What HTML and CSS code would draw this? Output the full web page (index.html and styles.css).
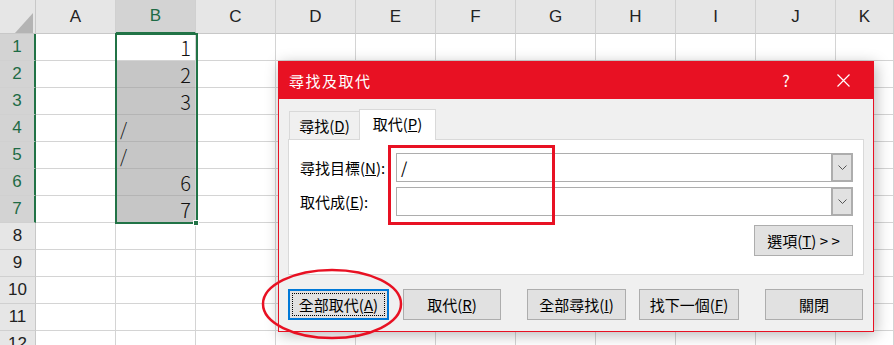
FILE: index.html
```html
<!DOCTYPE html>
<html lang="zh-Hant">
<head>
<meta charset="utf-8">
<title>尋找及取代</title>
<link rel="stylesheet" href="styles.css">
</head>
<body>
<div class="sheet">
  <div class="corner"><svg width="36" height="34" viewBox="0 0 36 34"><polygon points="15,33 33,33 33,13" fill="#b4b4b4"/></svg></div>
  <div class="ch">A</div><div class="ch sel">B</div><div class="ch">C</div><div class="ch">D</div><div class="ch">E</div><div class="ch">F</div><div class="ch">G</div><div class="ch">H</div><div class="ch">I</div><div class="ch">J</div><div class="ch">K</div>

  <div class="rh sel">1</div><div class="c"></div><div class="c b num">1</div><div class="c"></div><div class="c"></div><div class="c"></div><div class="c"></div><div class="c"></div><div class="c"></div><div class="c"></div><div class="c"></div><div class="c"></div>
  <div class="rh sel">2</div><div class="c"></div><div class="c b fill num">2</div><div class="c"></div><div class="c"></div><div class="c"></div><div class="c"></div><div class="c"></div><div class="c"></div><div class="c"></div><div class="c"></div><div class="c"></div>
  <div class="rh sel">3</div><div class="c"></div><div class="c b fill num">3</div><div class="c"></div><div class="c"></div><div class="c"></div><div class="c"></div><div class="c"></div><div class="c"></div><div class="c"></div><div class="c"></div><div class="c"></div>
  <div class="rh sel">4</div><div class="c"></div><div class="c b fill txt">/</div><div class="c"></div><div class="c"></div><div class="c"></div><div class="c"></div><div class="c"></div><div class="c"></div><div class="c"></div><div class="c"></div><div class="c"></div>
  <div class="rh sel">5</div><div class="c"></div><div class="c b fill txt">/</div><div class="c"></div><div class="c"></div><div class="c"></div><div class="c"></div><div class="c"></div><div class="c"></div><div class="c"></div><div class="c"></div><div class="c"></div>
  <div class="rh sel">6</div><div class="c"></div><div class="c b fill num">6</div><div class="c"></div><div class="c"></div><div class="c"></div><div class="c"></div><div class="c"></div><div class="c"></div><div class="c"></div><div class="c"></div><div class="c"></div>
  <div class="rh sel">7</div><div class="c"></div><div class="c b fill num">7</div><div class="c"></div><div class="c"></div><div class="c"></div><div class="c"></div><div class="c"></div><div class="c"></div><div class="c"></div><div class="c"></div><div class="c"></div>
  <div class="rh">8</div><div class="c"></div><div class="c"></div><div class="c"></div><div class="c"></div><div class="c"></div><div class="c"></div><div class="c"></div><div class="c"></div><div class="c"></div><div class="c"></div><div class="c"></div>
  <div class="rh">9</div><div class="c"></div><div class="c"></div><div class="c"></div><div class="c"></div><div class="c"></div><div class="c"></div><div class="c"></div><div class="c"></div><div class="c"></div><div class="c"></div><div class="c"></div>
  <div class="rh">10</div><div class="c"></div><div class="c"></div><div class="c"></div><div class="c"></div><div class="c"></div><div class="c"></div><div class="c"></div><div class="c"></div><div class="c"></div><div class="c"></div><div class="c"></div>
  <div class="rh">11</div><div class="c"></div><div class="c"></div><div class="c"></div><div class="c"></div><div class="c"></div><div class="c"></div><div class="c"></div><div class="c"></div><div class="c"></div><div class="c"></div><div class="c"></div>
  <div class="rh">12</div><div class="c"></div><div class="c"></div><div class="c"></div><div class="c"></div><div class="c"></div><div class="c"></div><div class="c"></div><div class="c"></div><div class="c"></div><div class="c"></div><div class="c"></div>

  <div class="selection"></div>
  <div class="handle"></div>
</div>

<div class="dialog">
  <div class="titlebar">
    <span class="title">尋找及取代</span>
    <span class="help">?</span>
    <span class="close"><svg width="13" height="13" viewBox="0 0 13 13"><path d="M0.5 0.5 L12.5 12.5 M12.5 0.5 L0.5 12.5" stroke="#fff" stroke-width="1.2" fill="none"/></svg></span>
  </div>
  <div class="dbody">
    <div class="tabs">
      <div class="tab">尋找(<u>D</u>)</div>
      <div class="tab active">取代(<u>P</u>)</div>
    </div>
    <div class="panel">
      <div class="field">
        <span class="label">尋找目標(<u>N</u>):</span>
        <div class="combo"><span class="val">/</span><span class="drop"><svg width="9" height="5" viewBox="0 0 9 5"><path d="M0.5 0.5 L4.5 4.5 L8.5 0.5" stroke="#555" stroke-width="1" fill="none"/></svg></span></div>
      </div>
      <div class="field">
        <span class="label">取代成(<u>E</u>):</span>
        <div class="combo"><span class="val"></span><span class="drop"><svg width="9" height="5" viewBox="0 0 9 5"><path d="M0.5 0.5 L4.5 4.5 L8.5 0.5" stroke="#555" stroke-width="1" fill="none"/></svg></span></div>
      </div>
      <div class="opts"><span class="btn opt">選項(<u>T</u>) &gt; &gt;</span></div>
    </div>
    <div class="actions">
      <span class="btn focus w101"><span class="dots">全部取代(<u>A</u>)</span></span>
      <span class="btn w98 g14">取代(<u>R</u>)</span>
      <span class="btn w99 g26">全部尋找(<u>I</u>)</span>
      <span class="btn w100 g13">找下一個(<u>F</u>)</span>
      <span class="btn w98 g26">關閉</span>
    </div>
  </div>
</div>

<div class="mark-rect"></div>
<svg class="mark-ellipse" width="144" height="74" viewBox="0 0 144 74"><ellipse cx="71" cy="36" rx="69" ry="34" stroke="#e81123" stroke-width="2.5" fill="none"/></svg>
</body>
</html>
```

FILE: styles.css
```css
* { box-sizing: border-box; }
html, body { margin: 0; padding: 0; background: #fff; overflow: hidden; }
body { width: 894px; height: 345px; position: relative; font-family: "Noto Sans CJK TC", "Liberation Sans", sans-serif; }

.sheet {
  display: grid;
  grid-template-columns: 36px repeat(10, 80px) 58px;
  grid-template-rows: 34px repeat(12, 27px);
  position: relative;
  width: 894px;
}
.corner { background: #e6e6e6; border-right: 1px solid #c8c8c8; border-bottom: 1px solid #c8c8c8; }
.corner svg { display: block; }
.ch {
  background: #e6e6e6;
  border-right: 1px solid #d0d0d0;
  border-bottom: 1px solid #c8c8c8;
  display: flex; align-items: center; justify-content: center;
  font-family: "Liberation Sans", sans-serif;
  font-size: 17px; color: #222;
}
.ch.sel { background: #d3d3d3; color: #1e6b45; border-bottom: 2px solid #217346; }
.rh {
  background: #e6e6e6;
  border-right: 1px solid #c8c8c8;
  border-bottom: 1px solid #d0d0d0;
  display: flex; align-items: center; justify-content: center;
  font-family: "Liberation Sans", sans-serif;
  font-size: 17px; color: #222;
}
.rh.sel { background: #d3d3d3; color: #1e6b45; border-right: 2px solid #217346; }
.c { border-right: 1px solid #d4d4d4; border-bottom: 1px solid #d4d4d4; }
.c.fill { background: #c6c6c6; border-bottom-color: #b4b4b4; }
.c.num, .c.txt {
  display: flex; align-items: flex-end;
  font-family: "Noto Sans CJK TC", sans-serif;
  font-weight: 300;
  font-size: 20px; line-height: 1; color: #111;
  padding: 0 4px 2px 4px;
}
.c.num { justify-content: flex-end; }
.c.txt { justify-content: flex-start; padding-bottom: 4px; font-size: 18px; }

.selection {
  position: absolute; left: 115px; top: 33px; width: 83px; height: 191px;
  border: 2px solid #217346; pointer-events: none;
}
.handle { position: absolute; left: 193px; top: 220px; width: 6px; height: 6px; background: #217346; border: 1px solid #fff; }

/* dialog */
.dialog {
  position: absolute; left: 278px; top: 61px; width: 596px; height: 271px;
  border: 1px solid #e81123; border-top: none;
  background: #f0f0f0;
  box-shadow: 2px 3px 14px rgba(0,0,0,0.28);
  font-size: 15px; color: #000;
}
.titlebar {
  height: 38px; background: #e81123; color: #fff;
  display: flex; align-items: center;
  margin: 0 -1px;
  padding-left: 11px;
}
.title { font-size: 15px; letter-spacing: 1.5px; flex: 1; }
.help { font-size: 16px; width: 20px; text-align: center; margin-right: 41px; }
.close { width: 13px; display: flex; margin-right: 24px; }
.close svg { display: block; }
.dbody { padding: 10px 0 0 9px; }
.tabs { display: flex; align-items: flex-end; height: 30px; padding-left: 1px; position: relative; z-index: 1; }
.tab {
  height: 28px; width: 71px;
  border: 1px solid #d9d9d9; border-bottom: none;
  display: flex; align-items: center; justify-content: center;
  font-size: 15px; background: #f0f0f0;
}
.tab.active { height: 31px; width: 77px; margin-bottom: -1px; margin-left: -1px; background: #fff; padding-bottom: 3px; }
.panel {
  width: 576px; height: 136px;
  background: #fff; border: 1px solid #d9d9d9;
  padding: 13px 10px 0 10px;
}
.field { display: flex; align-items: center; height: 29px; margin-bottom: 5px; }
.label { width: 97px; font-size: 15px; padding-left: 1px; }
.combo {
  width: 457px; height: 29px;
  border: 1px solid #adadad;
  display: flex; align-items: stretch; background: #fff;
}
.val { flex: 1; padding-left: 4px; font-size: 16px; line-height: 27px; }
.drop {
  width: 22px; background: #e1e1e1;
  border: 2px solid #adadad; margin: -1px -1px -1px 0;
  display: flex; align-items: center; justify-content: center;
}
.drop svg { display: block; }
.opts { display: flex; justify-content: flex-end; margin-top: 9px; padding-right: 0; }
.btn {
  display: inline-flex; align-items: center; justify-content: center;
  height: 31px;
  background: #e1e1e1; border: 1px solid #adadad;
  font-size: 15px; color: #000;
}
.opt { width: 99px; }
.actions { display: flex; margin-top: 14px; }
.w101 { width: 101px; } .w98 { width: 98px; } .w99 { width: 99px; } .w100 { width: 100px; }
.g14 { margin-left: 14px; } .g26 { margin-left: 26px; } .g13 { margin-left: 13px; }
.btn.focus { border: 2px solid #0078d7; padding: 2px; }
.dots {
  flex: 1; align-self: stretch;
  border: 1px dotted #000;
  display: flex; align-items: center; justify-content: center;
}

.mark-rect {
  position: absolute; left: 388px; top: 145px; width: 167px; height: 80px;
  border: 3px solid #e81123;
}
.mark-ellipse { position: absolute; left: 261px; top: 268px; }
```
